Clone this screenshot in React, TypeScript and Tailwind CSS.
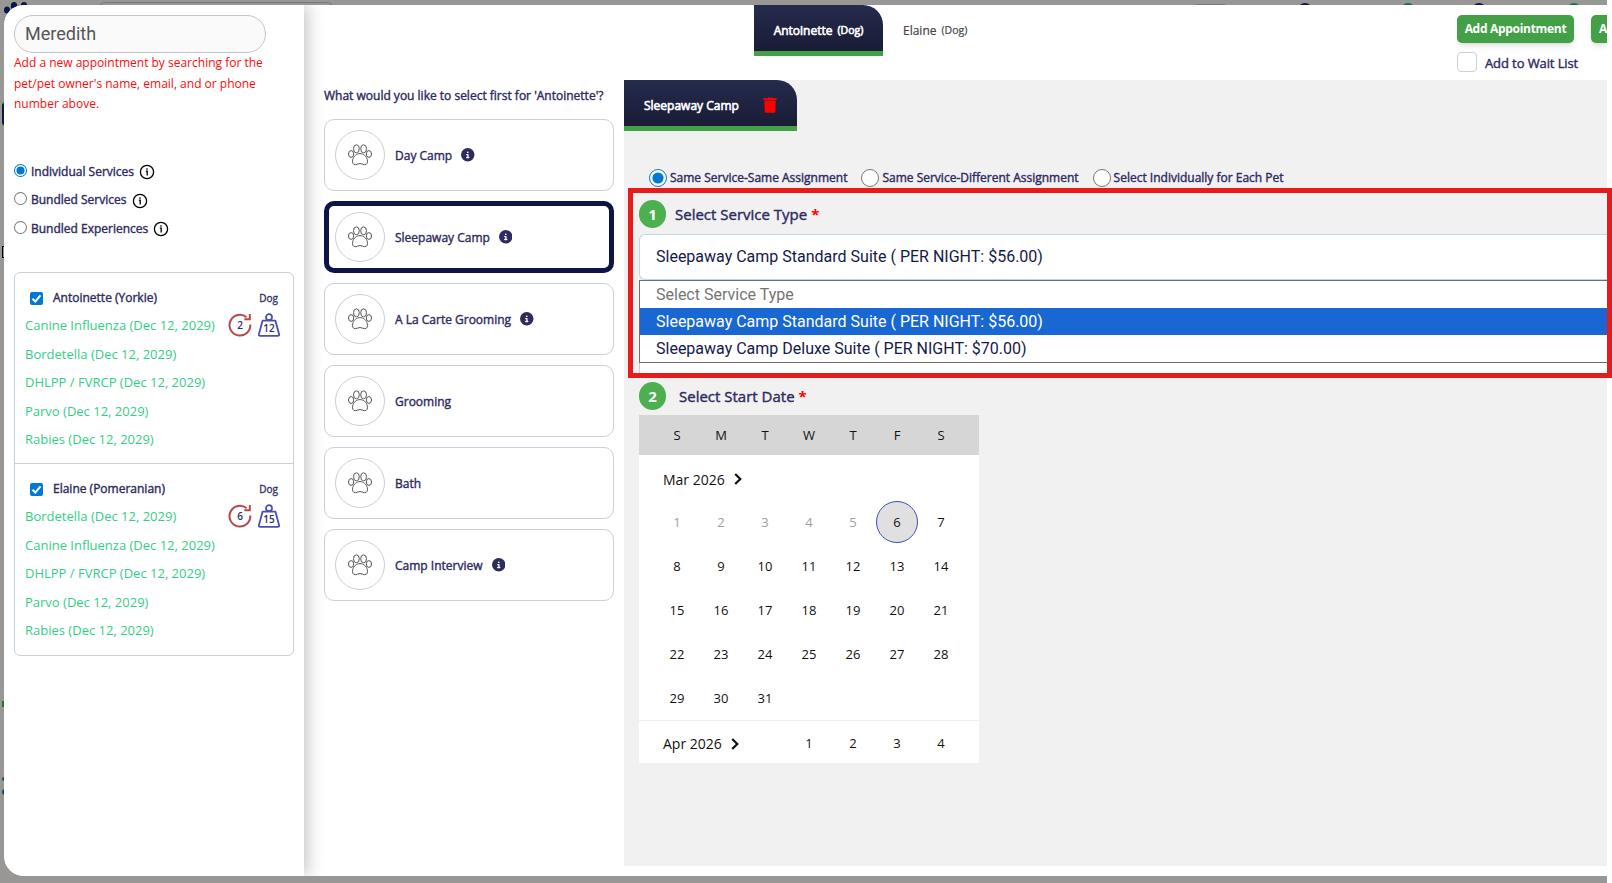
import { FaCircleInfo } from "react-icons/fa6";

type Pet = {
  name: string;
  species: string;
  age: number;
  weight: number;
  vaccines: string[];
};

const PETS: Pet[] = [
  {
    name: "Antoinette (Yorkie)",
    species: "Dog",
    age: 2,
    weight: 12,
    vaccines: ["Canine Influenza", "Bordetella", "DHLPP / FVRCP", "Parvo", "Rabies"],
  },
  {
    name: "Elaine (Pomeranian)",
    species: "Dog",
    age: 6,
    weight: 15,
    vaccines: ["Bordetella", "Canine Influenza", "DHLPP / FVRCP", "Parvo", "Rabies"],
  },
];

const SERVICES = [
  { label: "Day Camp", info: true },
  { label: "Sleepaway Camp", info: true, active: true },
  { label: "A La Carte Grooming", info: true },
  { label: "Grooming" },
  { label: "Bath" },
  { label: "Camp Interview", info: true },
];

const BOOKING_TYPES = ["Individual Services", "Bundled Services", "Bundled Experiences"];
const ASSIGNMENTS = ["Same Service-Same Assignment", "Same Service-Different Assignment", "Select Individually for Each Pet"];
const WEEKDAYS = ["S", "M", "T", "W", "T", "F", "S"];
const MARCH = Array.from({ length: 31 }, (_, i) => i + 1);

/* Slightly emboldened label text, shared by most headings and labels */
const STROKE = "[-webkit-text-stroke:0.4px_currentColor]";

const Radio = ({ checked, large }: { checked?: boolean; large?: boolean }) => (
  <svg viewBox="0 0 18 18" className={large ? "size-[18px] shrink-0" : "size-[13px] shrink-0"}>
    <circle cx="9" cy="9" r={large ? 8.5 : 8.3} fill="#fff" stroke={checked ? "#0078d7" : "#767676"} strokeWidth={large ? 1 : 1.4} />
    {checked && <circle cx="9" cy="9" r="5.6" fill="#0078d7" />}
  </svg>
);

const InfoOutline = () => (
  <svg viewBox="0 0 16 16" className="size-4" fill="none" stroke="#000" strokeWidth="1.3">
    <circle cx="8" cy="8" r="6.6" />
    <path d="M6.8 7.2h1.4v4.2" />
    <circle cx="8" cy="5" r=".5" fill="#000" strokeWidth=".6" />
  </svg>
);

const Paw = () => (
  <svg viewBox="0 0 24 22" className="h-[22px] w-6" fill="none" stroke="#555" strokeWidth="1">
    <ellipse cx="8.4" cy="4.8" rx="2.9" ry="4" />
    <ellipse cx="15.6" cy="4.8" rx="2.9" ry="4" />
    <ellipse cx="3.1" cy="10" rx="2.6" ry="3.4" />
    <ellipse cx="20.9" cy="10" rx="2.6" ry="3.4" />
    <path d="M12 9.6c-3.600 0-6.400 2.500-7.300 6.200-.7 2.800.3 4.900 2.600 4.900 1.900 0 2.900-1.200 4.700-1.200s2.800 1.200 4.700 1.200c2.300 0 3.300-2.100 2.600-4.900-.9-3.700-3.700-6.200-7.300-6.200z" />
  </svg>
);

const AgeIcon = ({ value }: { value: number }) => (
  <span className="relative flex size-6 items-center justify-center text-[10px] font-semibold text-[#2e2b5f]">
    <svg viewBox="0 0 24 24" className="absolute inset-0" fill="none" stroke="#b5494b" strokeWidth="2">
      <path d="M22.300 11.500A10.400 10.400 0 1 1 18.600 4.200" />
      <path d="M21.800 1v5.200h-5.500" />
    </svg>
    <span className="relative">{value}</span>
  </span>
);

const WeightIcon = ({ value }: { value: number }) => (
  <span className="relative flex h-6 w-[22px] items-end justify-center pb-px text-[10px] font-semibold text-[#2e2b5f]">
    <svg viewBox="0 0 22 24" className="absolute inset-0" fill="none" stroke="#4a4fb5" strokeWidth="1.800" strokeLinejoin="round">
      <circle cx="11" cy="4.200" r="3" />
      <path d="M4.600 7.600h12.800l3.700 13.600q.3 1.700-1.400 1.700H2.300q-1.700 0-1.400-1.700z" />
    </svg>
    <span className="relative leading-[15px]">{value}</span>
  </span>
);

const PetCard = ({ pet }: { pet: Pet }) => (
  <div className="h-[191px] px-[10px] pt-[16px]">
    <div className="flex h-[18px] items-center pl-[5px] pr-[5px]">
      <span className="flex size-[13px] items-center justify-center rounded-[2px] bg-[#0078d7]">
        <svg viewBox="0 0 13 13" className="size-[13px]" fill="none" stroke="#fff" strokeWidth="2">
          <path d="M2.500 6.800 5.300 9.500 10.500 3.300" />
        </svg>
      </span>
      <span className={`ml-[10px] text-[12px] text-[#2e2b5f] ${STROKE}`}>{pet.name}</span>
      <span className="ml-auto text-[10px] text-[#2e2b5f] [-webkit-text-stroke:0.3px_currentColor]">{pet.species}</span>
    </div>
    <div className="flex justify-between">
      <ul className="pt-[4px] text-[13px] text-[#34ce85]">
        {pet.vaccines.map((v) => (
          <li key={v} className="h-[28.5px] leading-[28.5px]">{v} (Dec 12, 2029)</li>
        ))}
      </ul>
      <div className="mr-[3px] flex gap-[6px] pt-[6px]">
        <AgeIcon value={pet.age} />
        <WeightIcon value={pet.weight} />
      </div>
    </div>
  </div>
);

const Sidebar = () => (
  <aside className="z-10 w-[300px] shrink-0 bg-white px-[10px] pt-[10px] shadow-[4px_0_16px_rgba(0,0,0,0.22)]">
    <div className="flex h-[38px] w-[252px] items-center rounded-[19px] border border-[#c4c4c4] bg-[#fafafa] pb-[2px] pl-[10px] font-[Roboto,sans-serif] text-[18px] text-[#555]">
      Meredith
    </div>
    <p className="w-[260px] text-[12px] leading-[20.500px] text-[#ff0a0a]">
      Add a new appointment by searching for the pet/pet owner's name, email, and or phone number above.
    </p>
    <div className="mt-[43px]">
      {BOOKING_TYPES.map((t, i) => (
        <div key={t} className="flex h-[28.500px] items-center">
          <span className="mb-[3px]"><Radio checked={i === 0} /></span>
          <span className={`ml-[4px] mr-[5px] text-[12px] text-[#2e2b5f] ${STROKE}`}>{t}</span>
          <span className="mt-px"><InfoOutline /></span>
        </div>
      ))}
    </div>
    <div className="mt-[29px] w-[280px] divide-y divide-[#c8cfd8] rounded-[6px] border border-[#c8cfd8]">
      {PETS.map((p) => <PetCard key={p.name} pet={p} />)}
    </div>
  </aside>
);

const ServicePicker = () => (
  <section className="w-[320px] shrink-0 pl-[20px] pt-[80px]">
    <p className={`h-[34px] whitespace-nowrap text-[12px] leading-[22px] text-[#2e2b5f] ${STROKE}`}>
      What would you like to select first for 'Antoinette'?
    </p>
    <div className="flex flex-col gap-[10px]">
      {SERVICES.map((s) => (
        <div
          key={s.label}
          className={`flex h-[72px] w-[290px] items-center rounded-[10px] ${s.active ? "border-[5px] border-[#0d1546] pl-[6px]" : "border border-[#c8cfd8] pl-[10px]"}`}
        >
          <span className="flex size-[50px] items-center justify-center rounded-full border border-[#c8cfd8]">
            <Paw />
          </span>
          <span className={`ml-[10px] mt-px text-[12px] text-[#2e2b5f] ${STROKE}`}>{s.label}</span>
          {s.info && <FaCircleInfo className="ml-[9px] size-[13.5px] text-[#2e2b5f]" />}
        </div>
      ))}
    </div>
  </section>
);

const StepTitle = ({ step, title, gap }: { step: number; title: string; gap: string }) => (
  <div className="flex h-7 items-center">
    <span className="flex h-7 w-[27px] items-center justify-center rounded-full bg-[#4caf50] text-[15px] font-bold text-white">{step}</span>
    <span className={`${gap} text-[15px] text-[#2e2b5f] ${STROKE}`}>{title}</span>
    <span className="ml-1 text-[15px] font-bold text-[#f00]">*</span>
  </div>
);

const Chevron = () => (
  <svg viewBox="0 0 8 12" className="h-3 w-2" fill="none" stroke="#111" strokeWidth="2.200">
    <path d="M1.200 1 6.300 6 1.200 11" />
  </svg>
);

const Calendar = () => (
  <div className="w-[340px] bg-white text-[13px] text-[#111]">
    <div className="grid h-10 grid-cols-[repeat(7,44px)] items-center bg-[#d6d6d6] pl-4 pt-px text-center">
      {WEEKDAYS.map((d, i) => <span key={i}>{d}</span>)}
    </div>
    <div className="flex h-[45px] items-center gap-[9px] pl-6 pt-[3px] text-[14px]">Mar 2026 <Chevron /></div>
    <div className="grid grid-cols-[repeat(7,44px)] border-b border-[#eee] pl-4 text-center">
      {MARCH.map((d) => (
        <span key={d} className="flex h-11 items-center justify-center">
          <span
            className={`flex size-[42px] items-center justify-center rounded-full pt-[2px] ${d === 6 ? "border border-[#3f51b5] bg-[#e0e0e0]" : ""} ${d < 6 ? "text-[#9e9e9e]" : ""}`}
          >
            {d}
          </span>
        </span>
      ))}
    </div>
    <div className="grid h-[42px] grid-cols-[repeat(7,44px)] items-center pl-4 pt-[3px] text-center">
      <span className="col-span-3 flex items-center gap-[9px] pl-2 text-[14px]">Apr 2026 <Chevron /></span>
      {[1, 2, 3, 4].map((d) => <span key={d}>{d}</span>)}
    </div>
  </div>
);

const TopBar = () => (
  <header className="flex h-[75px] items-start">
    <div className="ml-[130px] flex h-[51px] w-[129px] items-center justify-center rounded-tr-[20px] border-b-[5px] border-[#43a047] bg-linear-to-b from-[#252b4d] to-[#191c35] pt-[6px] text-[12px] text-white [-webkit-text-stroke:0.6px_currentColor]">
      Antoinette<span className="ml-[5px] text-[10.500px]">(Dog)</span>
    </div>
    <div className="ml-5 flex h-[52px] items-center text-[12px] text-[#444] [-webkit-text-stroke:0.2px_currentColor]">
      Elaine<span className="ml-[5px] text-[10.500px]">(Dog)</span>
    </div>
    <div className="ml-auto w-[150px] shrink-0 overflow-hidden pt-[10px]">
      <div className="flex gap-[17px]">
        <span className="flex h-7 w-[117px] shrink-0 items-center justify-center rounded-[5px] bg-[#43a047] text-[12px] font-bold tracking-[-0.3px] text-white shadow-md">Add Appointment</span>
        <span className="flex h-7 w-4 shrink-0 items-center rounded-l-[5px] bg-[#43a047] pl-[8px] text-[12px] font-bold text-white shadow-md">A</span>
      </div>
      <div className="mt-[9px] flex h-5 items-center">
        <span className="size-5 rounded-[4px] border border-[#c8cfd8]" />
        <span className={`ml-2 mt-[3px] text-[13px] tracking-[-0.1px] text-[#2e2b5f] ${STROKE}`}>Add to Wait List</span>
      </div>
    </div>
  </header>
);

const ServiceForm = () => (
  <div className="h-[786px] bg-[#f1f1f1]">
    <div className="flex h-[51px] w-[173px] items-center justify-between rounded-tr-[20px] border-b-[5px] border-[#43a047] bg-linear-to-b from-[#252b4d] to-[#191c35] pl-5 pr-5 pt-[4px] text-[12px] text-white">
      <span className="pt-[2px] [-webkit-text-stroke:0.6px_currentColor]">Sleepaway Camp</span>
      <svg viewBox="0 0 14 16" className="h-4 w-[14px]" fill="#f00">
        <path d="M.3 1.200h4L5 .4h4l.7.8h4v1.700H.3zM1.300 3.600h11.400l-.5 11.300q0 .9-1 .9H2.800q-1 0-1-.9z" />
      </svg>
    </div>
    <div className="flex h-[58px] items-end gap-[14px] pb-px pl-[25px]">
      {ASSIGNMENTS.map((a, i) => (
        <label key={a} className="flex items-center gap-[3px] whitespace-nowrap">
          <Radio checked={i === 0} large />
          <span className={`text-[12px] leading-5 text-[#2e2b5f] ${STROKE}`}>{a}</span>
        </label>
      ))}
    </div>
    <div className="relative z-10 ml-1 mr-[-5px] mt-[-1px] h-[190px] border-[5px] border-[#e81b1b] pl-[6px] pt-[7px]">
      <StepTitle step={1} title="Select Service Type" gap="ml-[9px]" />
      <div className="mt-[6px] flex h-[46px] items-center rounded-l-[6px] border border-r-0 border-[#b9d8e8] bg-white pl-4 font-[Roboto,sans-serif] text-[16px] text-[#14194a]">
        Sleepaway Camp Standard Suite ( PER NIGHT: $56.00)
      </div>
      <div className="border border-r-0 border-[#6e6e6e] bg-white font-[Roboto,sans-serif] text-[16px] leading-[27px]">
        <div className="pl-4 text-[#757575]">Select Service Type</div>
        <div className="bg-[#1967d2] pl-4 text-white">Sleepaway Camp Standard Suite ( PER NIGHT: $56.00)</div>
        <div className="pl-4 text-[#14194a]">Sleepaway Camp Deluxe Suite ( PER NIGHT: $70.00)</div>
      </div>
      <div className="h-[10px] border-l border-[#ccc] bg-white" />
    </div>
    <div className="pl-[15px] pt-[4px]">
      <StepTitle step={2} title="Select Start Date" gap="ml-[13px]" />
      <div className="mt-[5px]"><Calendar /></div>
    </div>
  </div>
);

/* Page header and edge that show behind the dialog */
const Backdrop = () => (
  <div className="absolute inset-y-0 left-0 w-[1607px] overflow-hidden bg-[#989796]">
    <svg viewBox="0 0 30 16" className="absolute left-[4px] top-[1px] h-4 w-[30px]" fill="#0a1747">
      <ellipse cx="3" cy="9" rx="3" ry="3.500" />
      <ellipse cx="10" cy="5" rx="3.200" ry="4" />
      <ellipse cx="20" cy="5" rx="3.200" ry="4" />
    </svg>
    <span className="absolute left-[96px] top-[2px] h-8 w-[240px] rounded-[10px] border border-[#777]" />
    <span className="absolute left-[1194px] top-[4px] h-2 w-[33px] rounded bg-[#777]" />
    <span className="absolute left-[1298px] top-[3px] size-[14px] rounded-full bg-[#0a1747]" />
    <span className="absolute left-[1401px] top-[3px] size-[14px] rounded-full bg-[#0b7a50]" />
    <span className="absolute left-[1472px] top-[3px] size-[14px] rounded-full bg-[#0a1747]" />
    <span className="absolute left-[1567px] top-[3px] size-[14px] rounded-full bg-[#0b7a50]" />
    <span className="absolute left-[2px] top-[101px] h-[26px] w-3 rounded border-y-2 border-[#4a9a70] bg-[#0a1747]" />
    <span className="absolute left-[2px] top-[246px] h-3 w-2 border border-black" />
    <span className="absolute left-[2px] top-[701px] h-[6px] w-2 border-2 border-[#147a2a]" />
    <span className="absolute left-[2px] top-[777px] h-1 w-2 rounded-full bg-[#145060]" />
    <span className="absolute left-[2px] top-[789px] h-[6px] w-2 rounded-full border-2 border-[#145060]" />
  </div>
);

const App = () => (
  <div className="relative h-[883px] w-[1612px] overflow-hidden bg-white font-['Open_Sans',sans-serif]">
    <Backdrop />
    <div className="relative flex h-[876px] pt-[5px] pl-1">
      <div className="flex h-[871px] w-[1603px] rounded-l-[20px] bg-white [clip-path:inset(0_-5px_0_0_round_20px_0_0_20px)]">
        <Sidebar />
        <ServicePicker />
        <main className="flex min-w-0 flex-1 flex-col">
          <TopBar />
          <ServiceForm />
        </main>
      </div>
    </div>
  </div>
);

export default App;
